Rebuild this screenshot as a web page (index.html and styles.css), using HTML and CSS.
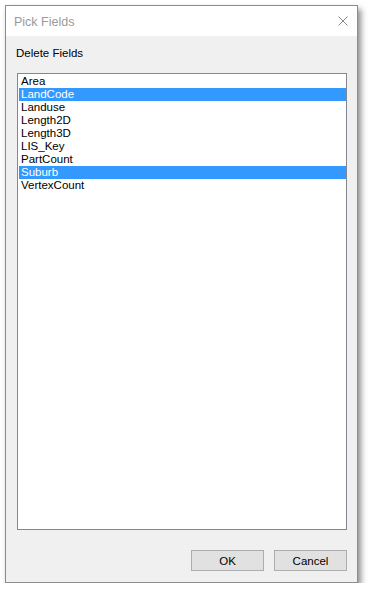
FILE: index.html
```html
<!DOCTYPE html>
<html>
<head>
<meta charset="utf-8">
<link rel="stylesheet" href="styles.css">
</head>
<body>
<div class="window">
  <div class="titlebar">
    <span class="title">Pick Fields</span>
    <svg class="close" width="10" height="10" viewBox="0 0 10 10"><path d="M0.5 0.5 L9.5 9.5 M9.5 0.5 L0.5 9.5" stroke="#8a8a8a" stroke-width="1" fill="none"/></svg>
  </div>
  <div class="content">
    <div class="heading">Delete Fields</div>
    <ul class="listbox">
      <li>Area</li>
      <li class="sel">LandCode</li>
      <li>Landuse</li>
      <li>Length2D</li>
      <li>Length3D</li>
      <li>LIS_Key</li>
      <li>PartCount</li>
      <li class="sel">Suburb</li>
      <li>VertexCount</li>
    </ul>
    <div class="buttons">
      <button class="btn">OK</button>
      <button class="btn">Cancel</button>
    </div>
  </div>
</div>
</body>
</html>
```

FILE: styles.css
```css
html, body {
  margin: 0;
  padding: 0;
  background: #ffffff;
}
body {
  padding: 5px 0 0 5px;
  font-family: "Liberation Sans", Arial, sans-serif;
  font-size: 11.5px;
}
.window {
  width: 351px;
  height: 576px;
  border: 1px solid #8c8c8c;
  background: #f0f0f0;
  box-shadow: 3px 4px 6px rgba(0, 0, 0, 0.45);
  display: flex;
  flex-direction: column;
}
.titlebar {
  height: 30px;
  background: #ffffff;
  display: flex;
  align-items: center;
  justify-content: space-between;
  padding: 0 9px 0 8px;
}
.title {
  color: #9a9a9a;
  font-size: 12.5px;
  padding-top: 1px;
}
.close {
  display: block;
}
.content {
  flex: 1;
  display: flex;
  flex-direction: column;
  padding: 10px 10px 11px 11px;
}
.heading {
  line-height: 14px;
  color: #000;
  margin-left: -1px;
}
.listbox {
  list-style: none;
  margin: 13px 0 0 0;
  padding: 1px 0 0 1px;
  border: 1px solid #828790;
  background: #ffffff;
  box-sizing: border-box;
  height: 457px;
}
.listbox li {
  height: 13px;
  line-height: 13px;
  padding-left: 2px;
  color: #000;
  white-space: nowrap;
}
.listbox li.sel {
  background: #3399ff;
  color: #ffffff;
}
.buttons {
  margin-top: auto;
  display: flex;
  justify-content: flex-end;
  gap: 10px;
}
.btn {
  width: 73px;
  height: 21px;
  border: 1px solid #adadad;
  background: #e1e1e1;
  font-family: "Liberation Sans", Arial, sans-serif;
  font-size: 11.5px;
  color: #000;
  padding: 0;
  margin: 0;
}
```
